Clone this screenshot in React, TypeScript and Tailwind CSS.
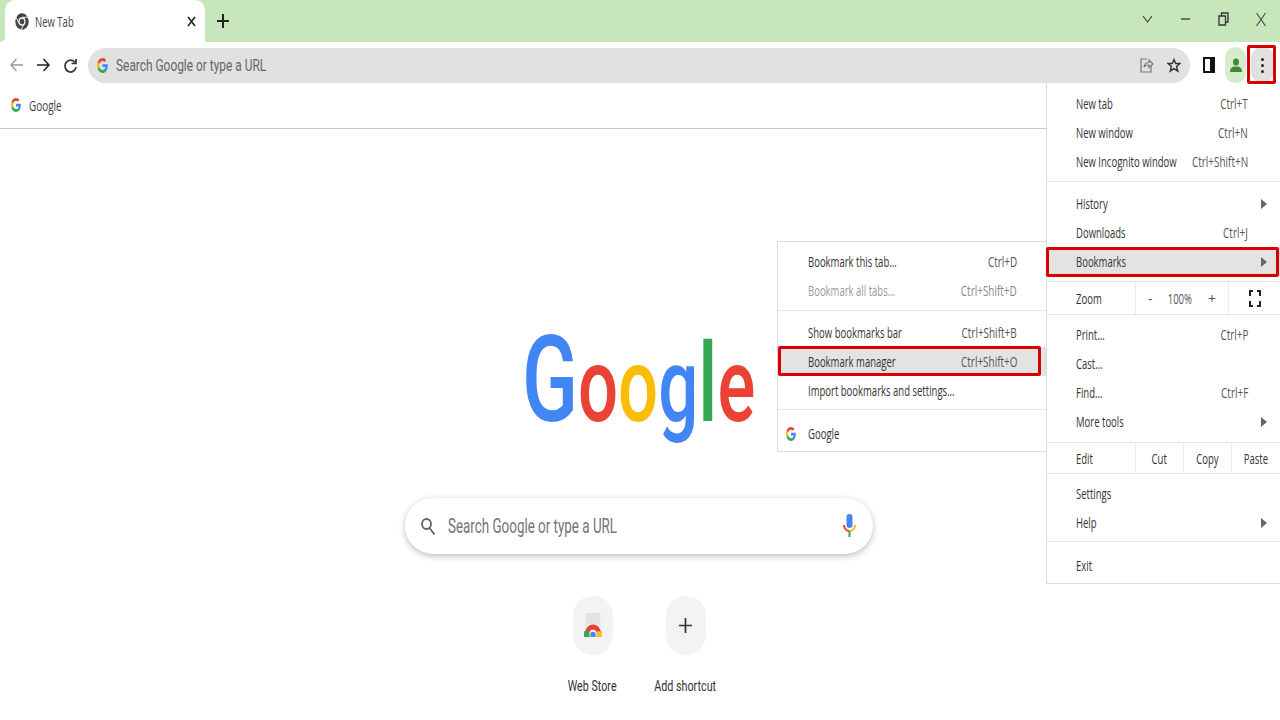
import type { ReactNode } from 'react'

const uiFont = "font-['Open_Sans','Liberation_Sans',sans-serif]"
const ntpFont = "font-['Roboto','Liberation_Sans',sans-serif]"

function GoogleG({ className }: { className: string }) {
  return (
    <svg viewBox="0 0 48 48" preserveAspectRatio="none" className={className}>
      <path fill="#EA4335" d="M24 9.5c3.54 0 6.71 1.22 9.21 3.6l6.85-6.85C35.9 2.38 30.47 0 24 0 14.62 0 6.51 5.38 2.56 13.22l7.98 6.19C12.43 13.72 17.74 9.5 24 9.5z" />
      <path fill="#4285F4" d="M46.98 24.55c0-1.57-.15-3.09-.38-4.55H24v9.02h12.94c-.58 2.96-2.26 5.48-4.78 7.18l7.73 6c4.51-4.18 7.09-10.36 7.09-17.65z" />
      <path fill="#FBBC05" d="M10.53 28.59c-.48-1.45-.76-2.99-.76-4.59s.27-3.14.76-4.59l-7.98-6.19C.92 16.46 0 20.12 0 24c0 3.88.92 7.54 2.56 10.78l7.97-6.19z" />
      <path fill="#34A853" d="M24 48c6.48 0 11.93-2.13 15.89-5.81l-7.73-6c-2.15 1.45-4.92 2.3-8.16 2.3-6.26 0-11.57-4.22-13.47-9.91l-7.98 6.19C6.51 42.62 14.62 48 24 48z" />
    </svg>
  )
}

// the whole screenshot is squeezed sideways, so text gets narrowed too
function Left({ children, className = '', scale = 'scale-x-[.68]' }: { children: ReactNode; className?: string; scale?: string }) {
  return <span className={`inline-block origin-left whitespace-nowrap ${scale} ${className}`}>{children}</span>
}

function Keys({ children, className = '' }: { children: ReactNode; className?: string }) {
  return <span className={`inline-block shrink-0 origin-right scale-x-[.71] whitespace-nowrap ${className}`}>{children}</span>
}

function Center({ children, className = '', scale = 'scale-x-[.68]' }: { children: ReactNode; className?: string; scale?: string }) {
  return <span className={`inline-block whitespace-nowrap ${scale} ${className}`}>{children}</span>
}

function Arrow() {
  return <span className="h-0 w-0 border-y-[5px] border-l-[6px] border-y-transparent border-l-[#666]" />
}

function Divider({ className = '' }: { className?: string }) {
  return <div className={`h-px bg-[#e6e6e6] ${className}`} />
}

function MenuRow({ label, keys, arrow, active }: { label: string; keys?: string; arrow?: boolean; active?: boolean }) {
  return (
    <div className={`flex h-[29px] items-center pl-[29px] pr-[13px] text-[14px] text-[#333] ${active ? 'bg-[#e3e3e3]' : ''}`}>
      <div className="w-0 flex-1">
        <Left>{label}</Left>
      </div>
      {keys && <Keys className="mr-[19px] text-[#555]">{keys}</Keys>}
      {arrow && <Arrow />}
    </div>
  )
}

function SubRow({ label, keys, active, muted }: { label: string; keys?: string; active?: boolean; muted?: boolean }) {
  return (
    <div className={`flex h-[29px] items-center pl-[30px] pr-[29px] text-[14px] text-[#333] ${active ? 'bg-[#e3e3e3]' : ''}`}>
      <div className="w-0 flex-1">
        <Left className={muted ? 'text-[#999]' : ''}>{label}</Left>
      </div>
      {keys && <Keys className={muted ? 'text-[#888]' : 'text-[#555]'}>{keys}</Keys>}
    </div>
  )
}

function AppMenu() {
  return (
    <div className={`absolute left-[1046px] top-[84px] h-[500px] w-[234px] border-b border-l border-[#dcdcdc] bg-white pt-[5px] ${uiFont}`}>
      <MenuRow label="New tab" keys="Ctrl+T" />
      <MenuRow label="New window" keys="Ctrl+N" />
      <MenuRow label="New Incognito window" keys="Ctrl+Shift+N" />
      <Divider className="mb-[7px] mt-[5px]" />
      <MenuRow label="History" arrow />
      <MenuRow label="Downloads" keys="Ctrl+J" />
      <MenuRow label="Bookmarks" arrow active />
      <Divider className="mt-[5px]" />
      <div className="flex h-[32px] items-center text-[14px] text-[#333]">
        <div className="w-[88px] pl-[29px]"><Left>Zoom</Left></div>
        <div className="flex h-full w-[94px] items-center justify-between border-x border-[#ececec] px-[12px] text-[#555]">
          <span>-</span>
          <Center>100%</Center>
          <span>+</span>
        </div>
        <div className="flex flex-1 justify-center">
          <svg width="12" height="17" viewBox="0 0 12 17" fill="none" stroke="#222" strokeWidth="2">
            <path d="M1 6V1h3M8 1h3v5M11 11v5H8M4 16H1v-5" />
          </svg>
        </div>
      </div>
      <Divider className="mb-[5px]" />
      <MenuRow label="Print..." keys="Ctrl+P" />
      <MenuRow label="Cast..." />
      <MenuRow label="Find..." keys="Ctrl+F" />
      <MenuRow label="More tools" arrow />
      <Divider className="mt-[6px]" />
      <div className="flex h-[30px] items-center text-[14px] text-[#333]">
        <div className="w-[88px] pl-[29px]"><Left>Edit</Left></div>
        <div className="flex h-full w-[49px] items-center justify-center border-x border-[#ececec]"><Center>Cut</Center></div>
        <div className="flex h-full w-[48px] items-center justify-center border-r border-[#ececec]"><Center>Copy</Center></div>
        <div className="flex h-full flex-1 items-center justify-center"><Center>Paste</Center></div>
      </div>
      <Divider className="mb-[5px]" />
      <MenuRow label="Settings" />
      <MenuRow label="Help" arrow />
      <Divider className="mb-[9px] mt-[4px]" />
      <MenuRow label="Exit" />
    </div>
  )
}

function BookmarksMenu() {
  return (
    <div className={`absolute left-[777px] top-[241px] h-[211px] w-[270px] border border-[#dcdcdc] bg-white pt-[5px] ${uiFont}`}>
      <SubRow label="Bookmark this tab..." keys="Ctrl+D" />
      <SubRow label="Bookmark all tabs..." keys="Ctrl+Shift+D" muted />
      <Divider className="mb-[7px] mt-[5px]" />
      <SubRow label="Show bookmarks bar" keys="Ctrl+Shift+B" />
      <SubRow label="Bookmark manager" keys="Ctrl+Shift+O" active />
      <SubRow label="Import bookmarks and settings..." />
      <Divider className="mb-[9px] mt-[4px]" />
      <div className="flex h-[29px] items-center text-[14px] text-[#333]">
        <GoogleG className="ml-[8px] mr-[12px] h-[14px] w-[10px]" />
        <Left>Google</Left>
      </div>
    </div>
  )
}

function TitleBar() {
  return (
    <div className="flex h-[42px] items-stretch bg-[#c8e6bb] pl-[5px]">
      <div className={`relative flex w-[200px] items-center rounded-t-[10px] bg-white pl-[10px] pr-[9px] text-[14px] text-[#444] ${uiFont}`}>
        <span className="absolute -left-[5px] bottom-0 h-[8px] w-[5px] bg-white">
          <span className="block h-full w-full rounded-br-[5px] bg-[#c8e6bb]" />
        </span>
        <svg width="14" height="17" viewBox="0 0 24 24" preserveAspectRatio="none" className="mr-[6px] shrink-0">
          <circle cx="12" cy="12" r="11.5" fill="#444" />
          <circle cx="12" cy="12" r="6" fill="#fff" />
          <circle cx="12" cy="12" r="4" fill="#444" />
          <path d="M12 6h10M7 15 2 6M15 16l-5 8" stroke="#fff" strokeWidth="1.4" />
        </svg>
        <div className="w-0 flex-1">
          <Left>New Tab</Left>
        </div>
        <svg width="9" height="11" viewBox="0 0 9 11" stroke="#222" strokeWidth="1.6"><path d="m1 1 7 9M8 1l-7 9" /></svg>
      </div>
      <svg width="12" height="14" viewBox="0 0 12 14" stroke="#222" strokeWidth="2" className="ml-[12px] self-center"><path d="M6 0v14M0 7h12" /></svg>
      <div className="ml-auto flex items-center gap-[25px] pb-[4px] pr-[13px]">
        <svg width="13" height="8" viewBox="0 0 13 8" fill="none" stroke="#444" strokeWidth="1.2"><path d="m2 1 4.500 6L11 1" /></svg>
        <svg width="13" height="2" viewBox="0 0 13 2" stroke="#444" strokeWidth="1.4"><path d="M2 1h9" /></svg>
        <svg width="13" height="14" viewBox="0 0 13 14" fill="none" stroke="#333" strokeWidth="1.3"><path d="M2 4h6.500v9H2zM4.500 4V1H11v9H8.500" /></svg>
        <svg width="12" height="15" viewBox="0 0 12 15" fill="none" stroke="#444" strokeWidth="1.1"><path d="m1.500 1 9 13M10.500 1l-9 13" /></svg>
      </div>
    </div>
  )
}

function Toolbar() {
  return (
    <div className="flex h-[45px] items-center bg-white pl-[10px] pr-[6px] pt-[1px]">
      <svg width="13" height="14" viewBox="0 0 13 14" fill="none" stroke="#9a9a9a" strokeWidth="1.4"><path d="M13 7H1M6.500 1 1 7l5.500 6" /></svg>
      <svg width="13" height="14" viewBox="0 0 13 14" fill="none" stroke="#222" strokeWidth="1.6" className="ml-[14px]"><path d="M0 7h12M6.500 1 12 7l-5.500 6" /></svg>
      <svg width="13" height="15" viewBox="0 0 13 15" fill="none" stroke="#333" strokeWidth="1.7" className="ml-[14px]"><path d="M11 4.500A5.500 6 0 1 0 12 9" /><path d="M12 1v4.500H7.500" /></svg>
      <div className="ml-[11px] flex h-[35px] w-[1102px] items-center rounded-full bg-[#e1e1e1] pl-[9px] pr-[9px]">
        <GoogleG className="h-[15px] w-[11px] shrink-0" />
        <div className="ml-[8px] w-0 flex-1 pt-[1px]">
          <Left scale="scale-x-[.7]" className={`text-[17px] text-[#666] ${ntpFont}`}>Search Google or type a URL</Left>
        </div>
        <svg width="14" height="16" viewBox="0 0 14 16" fill="none" stroke="#777" strokeWidth="1.2"><path d="M7 2H1v13h10V9" /><path d="M4 10c.5-3 3-4.500 5-4.500V3l4 4-4 3.500V8c-2 0-4 .5-5 2z" /></svg>
        <svg width="14" height="15" viewBox="0 0 14 15" fill="none" stroke="#333" strokeWidth="1.4" className="ml-[13px]"><path d="m7 1.500 1.700 4H13l-3.400 3 1.200 4.700L7 10.700l-3.800 2.500 1.200-4.700L1 5.500h4.300z" /></svg>
      </div>
      <div className="ml-[13px] h-[16px] w-[12px] border-[2px] border-r-[5px] border-[#111]" />
      <div className="ml-[10px] flex h-[36px] w-[21px] items-center justify-center rounded-full bg-[#d7ebcd]">
        <svg width="12" height="15" viewBox="0 0 12 15" fill="#3d8c2f"><ellipse cx="6" cy="4" rx="3" ry="3.500" /><path d="M0 14c0-4 2-5.500 6-5.500s6 1.500 6 5.500z" /></svg>
      </div>
      <div className="ml-[5px] flex h-[36px] w-[23px] flex-col items-center justify-center gap-[3px] rounded-full bg-[#e1e1e1]">
        <span className="h-[3px] w-[3px] rounded-full bg-[#222]" />
        <span className="h-[3px] w-[3px] rounded-full bg-[#222]" />
        <span className="h-[3px] w-[3px] rounded-full bg-[#222]" />
      </div>
    </div>
  )
}

function BookmarkBar() {
  return (
    <div className={`flex h-[42px] items-center border-b border-[#c9c9c9] bg-white pb-[5px] pl-[11px] text-[14px] text-[#444] ${uiFont}`}>
      <GoogleG className="mr-[8px] h-[14px] w-[10px]" />
      <Left scale="scale-x-[.71]">Google</Left>
    </div>
  )
}

function Logo() {
  return (
    <div className={`flex h-[140px] items-start justify-center text-[104px] font-medium leading-[110px] ${ntpFont}`}>
      <span className="inline-block origin-center scale-x-[.68] whitespace-nowrap">
        <span className="text-[121px] text-[#4285f4]">G</span>
        <span className="text-[#ea4335]">o</span>
        <span className="text-[#fbbc05]">o</span>
        <span className="text-[#4285f4]">g</span>
        <span className="text-[110px] text-[#34a853]">l</span>
        <span className="text-[#ea4335]">e</span>
      </span>
    </div>
  )
}

function Shortcut({ label, children }: { label: string; children: ReactNode }) {
  return (
    <div className="flex w-[93px] flex-col items-center">
      <div className="flex h-[59px] w-[40px] items-center justify-center rounded-full bg-[#f1f3f4]">{children}</div>
      <Center scale="scale-x-[.715]" className="mt-[20px] text-[15px] text-[#333]">{label}</Center>
    </div>
  )
}

function NewTabPage() {
  return (
    <div className={`flex flex-col items-center bg-white pr-[2px] pt-[196px] ${ntpFont}`}>
      <Logo />
      <div className="mt-[33px] flex h-[56px] w-[468px] items-center rounded-full bg-white pl-[16px] pr-[17px] shadow-[0_2px_6px_rgba(32,33,36,.3)]">
        <svg width="14" height="17" viewBox="0 0 14 17" fill="none" stroke="#5f6368" strokeWidth="1.800"><ellipse cx="5.500" cy="6" rx="4.500" ry="5" /><path d="m8.500 10 5 6.500" /></svg>
        <div className="ml-[13px] w-0 flex-1">
          <Left scale="scale-x-[.67]" className="text-[20px] text-[#70757a]">Search Google or type a URL</Left>
        </div>
        <svg width="13" height="24" viewBox="0 0 13 24" fill="none">
          <rect x="3.500" y="0" width="6" height="14" rx="3" fill="#4285f4" />
          <path d="M1 11c0 3.500 2.500 6 5.500 6" stroke="#ea4335" strokeWidth="2" />
          <path d="M12 11c0 3.500-2.500 6-5.500 6" stroke="#fbbc05" strokeWidth="2" />
          <path d="M6.500 17v6" stroke="#34a853" strokeWidth="2" />
        </svg>
      </div>
      <div className="mt-[42px] flex">
        <Shortcut label="Web Store">
          <svg width="18" height="25" viewBox="0 0 20 26" preserveAspectRatio="none">
            <rect x="2" y="0" width="16" height="12" fill="#e2e3e4" />
            <rect x="1" y="11" width="18" height="14" fill="#e8eaed" />
            <path d="M0 25a10 13 0 0 1 20 0z" fill="#ea4335" />
            <rect x="0" y="19" width="6" height="6" fill="#34a853" />
            <rect x="14" y="19" width="6" height="6" fill="#fbc02d" />
            <ellipse cx="10" cy="22" rx="4" ry="4.500" fill="#fff" />
            <ellipse cx="10" cy="22.500" rx="3" ry="3" fill="#4285f4" />
            <rect x="0" y="25" width="20" height="1" fill="#f1f3f4" />
          </svg>
        </Shortcut>
        <Shortcut label="Add shortcut">
          <svg width="13" height="15" viewBox="0 0 13 15" stroke="#333" strokeWidth="1.700"><path d="M6.500 0v15M0 7.500h13" /></svg>
        </Shortcut>
      </div>
    </div>
  )
}

export default function App() {
  return (
    <div className="relative h-[720px] w-[1280px] overflow-hidden bg-white">
      <TitleBar />
      <Toolbar />
      <BookmarkBar />
      <NewTabPage />
      <BookmarksMenu />
      <AppMenu />
      {/* red highlight boxes drawn over the screenshot */}
      <div className="absolute left-[1247px] top-[45px] h-[39px] w-[29px] rounded-[2px] border-[3px] border-[#d90000]" />
      <div className="absolute left-[1046px] top-[247px] h-[30px] w-[233px] rounded-[2px] border-[3px] border-[#d90000]" />
      <div className="absolute left-[778px] top-[346px] h-[30px] w-[263px] rounded-[2px] border-[3px] border-[#d90000]" />
    </div>
  )
}
